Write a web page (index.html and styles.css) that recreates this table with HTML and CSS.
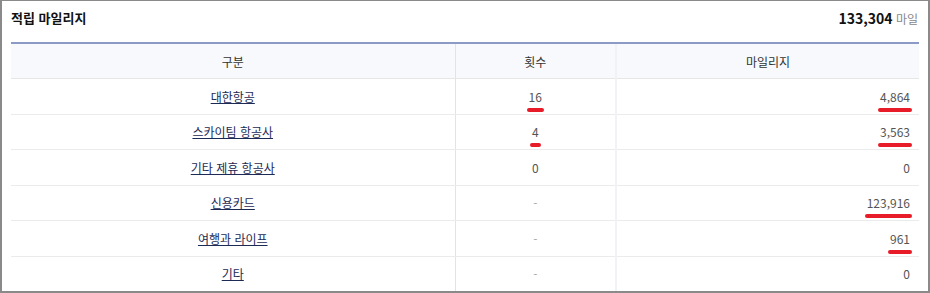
FILE: index.html
```html
<!DOCTYPE html>
<html lang="ko">
<head>
<meta charset="utf-8">
<link rel="stylesheet" href="styles.css">
</head>
<body>
<div class="frame">
  <div class="head">
    <h2 class="title">적립 마일리지</h2>
    <div class="total"><strong>133,304</strong> <span class="unit">마일</span></div>
  </div>
  <div class="tbl-wrap">
    <table class="tbl">
      <colgroup>
        <col class="c1"><col class="c2"><col class="c3">
      </colgroup>
      <thead>
        <tr><th>구분</th><th>횟수</th><th class="last">마일리지</th></tr>
      </thead>
      <tbody>
        <tr><td><a href="#">대한항공</a></td><td class="num"><span class="mark">16</span></td><td class="amt last"><span class="mark">4,864</span></td></tr>
        <tr><td><a href="#">스카이팀 항공사</a></td><td class="num"><span class="mark">4</span></td><td class="amt last"><span class="mark">3,563</span></td></tr>
        <tr><td><a href="#">기타 제휴 항공사</a></td><td class="num">0</td><td class="amt last">0</td></tr>
        <tr><td><a href="#">신용카드</a></td><td class="num dash">-</td><td class="amt last"><span class="mark">123,916</span></td></tr>
        <tr><td><a href="#">여행과 라이프</a></td><td class="num dash">-</td><td class="amt last"><span class="mark">961</span></td></tr>
        <tr><td><a href="#">기타</a></td><td class="num dash">-</td><td class="amt last">0</td></tr>
      </tbody>
    </table>
  </div>
</div>
</body>
</html>
```
FILE: styles.css
```css
html, body {
  margin: 0;
  padding: 0;
  background: #fff;
}
.frame {
  box-sizing: border-box;
  width: 930px;
  height: 293px;
  overflow: hidden;
  border: 2px solid #8a8a8a;
  border-top-width: 1px;
  padding: 0 10px 0 9px;
  font-family: "Noto Sans CJK KR", "Noto Sans", sans-serif;
  color: #333;
}
.head {
  display: flex;
  justify-content: space-between;
  align-items: center;
  height: 33px;
}
.title {
  margin: 0;
  font-size: 13px;
  font-weight: 700;
  color: #111;
}
.total {
  font-size: 12px;
  color: #888;
}
.total strong {
  font-size: 14px;
  color: #111;
  font-weight: 700;
}
.tbl-wrap {
  width: 908px;
  margin-top: 8px;
  border-top: 2px solid #8b9bc5;
}
.tbl {
  width: 908px;
  border-collapse: collapse;
  table-layout: fixed;
  font-size: 12px;
}
.c1 { width: 444px; }
.c2 { width: 161px; }
.c3 { width: 303px; }
.tbl th {
  height: 34px;
  padding: 0;
  background: #f7f9fc;
  font-weight: 400;
  color: #333;
  border-bottom: 1px solid #e6e6e6;
  border-right: 1px solid #e3e3e3;
}
.tbl td {
  height: 34.5px;
  padding: 0;
  text-align: center;
  border-bottom: 1px solid #ebebeb;
  border-right: 1px solid #e3e3e3;
  color: #555;
}
.tbl th:nth-child(2), .tbl td:nth-child(2) {
  border-right: 2px solid #f1f2f5;
}
.tbl .last { border-right: none; }
.tbl td.amt {
  text-align: right;
  padding-right: 9px;
}
.tbl a {
  color: #1c2a55;
  text-decoration: underline;
}
.dash { color: #aaa !important; }
.mark {
  position: relative;
  display: inline-block;
}
.mark::after {
  content: "";
  position: absolute;
  left: -2px;
  right: -2px;
  bottom: -7px;
  height: 4px;
  border-radius: 2px;
  background: #e81c28;
}
```
